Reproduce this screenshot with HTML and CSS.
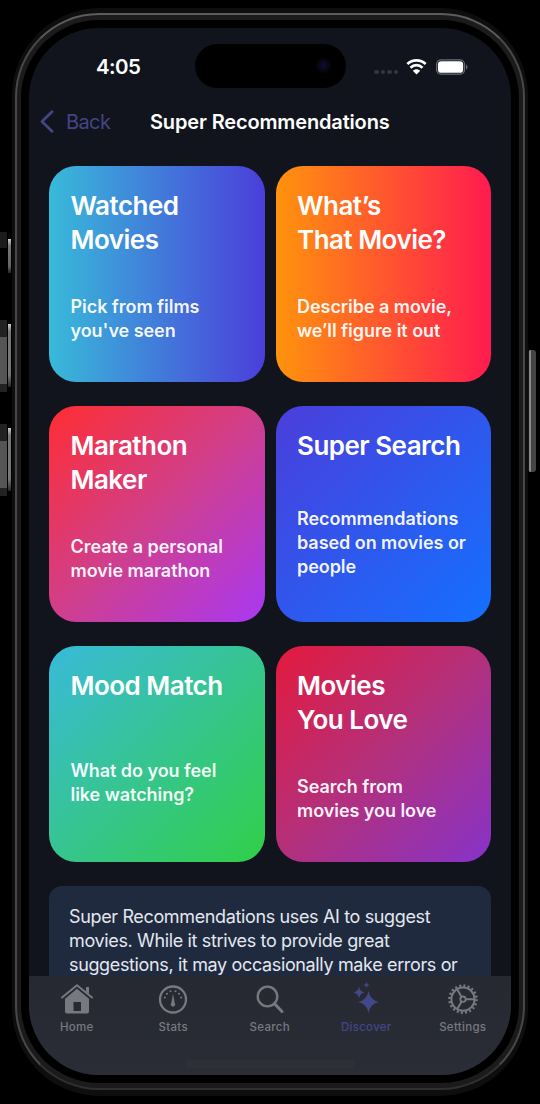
FILE: index.html
```html
<!DOCTYPE html>
<html lang="en">
<head>
<meta charset="utf-8">
<title>Super Recommendations</title>
<link rel="stylesheet" href="styles.css">
</head>
<body>
<div class="stage">
  <span class="key key-action"></span>
  <span class="key key-up"></span>
  <span class="key key-down"></span>
  <span class="key key-power"></span>
  <div class="frame"><div class="rim"><div class="bezel">
    <main class="screen">
      <div class="island"><span class="lens"></span></div>
      <header class="status">
        <span class="time">4:05</span>
        <span class="indicators">
          <span class="dots"><i></i><i></i><i></i><i></i></span>
          <svg class="wifi" viewBox="0 0 20 16"><path d="M1.3 5.600C6.200 1 13.800 1 18.700 5.600M4.300 9.100c3.300-3.200 8.100-3.200 11.400 0" fill="none" stroke="#fff" stroke-width="2.600"/><path d="M6.400 12C8.400 10 11.600 10 13.600 12L10 15.600z" fill="#fff"/></svg>
          <svg class="battery" viewBox="0 0 34 16"><rect x=".6" y=".6" width="28.800" height="14.800" rx="4.600" fill="none" stroke="#696c73" stroke-width="1.200"/><rect x="2" y="2" width="26" height="12" rx="3.500" fill="#fff"/><path d="M31 5.500c2 .8 2 4.200 0 5z" fill="#696c73"/></svg>
        </span>
      </header>
      <nav class="topbar">
        <a class="back"><svg viewBox="0 0 14 23"><path d="M12 1.800 2 11.500 12 21.200" fill="none" stroke="currentColor" stroke-width="2.800" stroke-linecap="round" stroke-linejoin="round"/></svg><span>Back</span></a>
        <h1 class="heading">Super Recommendations</h1>
      </nav>
      <section class="grid">
        <article class="card watched"><h2>Watched<br>Movies</h2><p>Pick from films<br>you've seen</p></article>
        <article class="card what"><h2>What’s<br>That Movie?</h2><p>Describe a movie,<br>we’ll figure it out</p></article>
        <article class="card marathon"><h2>Marathon<br>Maker</h2><p>Create a personal<br>movie marathon</p></article>
        <article class="card search"><h2>Super Search</h2><p>Recommendations<br>based on movies or<br>people</p></article>
        <article class="card mood"><h2>Mood Match</h2><p>What do you feel<br>like watching?</p></article>
        <article class="card love"><h2>Movies<br>You Love</h2><p>Search from<br>movies you love</p></article>
      </section>
      <section class="notice">Super Recommendations uses AI to suggest<br>movies. While it strives to provide great<br>suggestions, it may occasionally make errors or</section>
      <footer class="tabs">
        <a class="tab"><svg viewBox="0 0 34 32"><path d="M2 14.500 17 2.200 32 14.500" fill="none" stroke="currentColor" stroke-width="2" stroke-linecap="round" stroke-linejoin="round"/><path d="M26 4h3v7l-3-2.500z" fill="currentColor"/><path fill-rule="evenodd" d="M17 5.800 29 15.700v12.800q0 2-2 2H7q-2 0-2-2V15.700zM13.500 19v9h7.500v-9z" fill="currentColor"/></svg><span>Home</span></a>
        <a class="tab"><svg viewBox="0 0 34 32"><circle cx="17" cy="16.500" r="13" fill="none" stroke="currentColor" stroke-width="2.300"/><path d="m17 10.500 1.700 9.500a2.200 2.200 0 1 1-3.400 0z" fill="currentColor"/><g fill="currentColor"><circle cx="8.800" cy="14.500" r="1.050"/><circle cx="11" cy="10.800" r="1.050"/><circle cx="14.500" cy="8.300" r="1.050"/><circle cx="19.500" cy="8.300" r="1.050"/><circle cx="23" cy="10.800" r="1.050"/><circle cx="25.200" cy="14.500" r="1.050"/></g></svg><span>Stats</span></a>
        <a class="tab"><svg viewBox="0 0 34 32"><circle cx="14.500" cy="13.500" r="9.800" fill="none" stroke="currentColor" stroke-width="2.300"/><path d="m21.800 21 7.200 7.500" stroke="currentColor" stroke-width="3" stroke-linecap="round"/></svg><span>Search</span></a>
        <a class="tab active"><svg viewBox="0 0 34 32"><path fill="currentColor" d="M19.500 8q1.600 9.200 10.500 11-8.900 1.800-10.500 11-1.600-9.200-10.500-11 8.900-1.800 10.500-11zM10 3.500q.9 5 5.500 6-4.600 1-5.500 6-.9-5-5.500-6 4.600-1 5.500-6zM17.500-.9q.5 2.500 3 3-2.500.5-3 3-.5-2.500-3-3 2.500-.5 3-3z"/></svg><span>Discover</span></a>
        <a class="tab"><svg viewBox="0 0 34 32"><g fill="none" stroke="currentColor"><circle cx="17" cy="16.200" r="13.500" stroke-width="2.600" stroke-dasharray="2 2.241"/><circle cx="17" cy="16.200" r="11.600" stroke-width="2"/><circle cx="17" cy="16.200" r="2.700" stroke-width="1.800"/><path d="M19.700 16.200H28M15.600 13.900 11.300 6.400M15.600 18.500l-4.300 7.500" stroke-width="2"/></g></svg><span>Settings</span></a>
        <i class="homebar"></i>
      </footer>
    </main>
  </div></div></div>
</div>
</body>
</html>
```
FILE: styles.css
```css
* { box-sizing: border-box; }
body { margin: 0; background: #000; font-family: Inter, "Liberation Sans", sans-serif; color: #fff; }
.stage { position: relative; width: 540px; height: 1104px; padding: 8px 12px; overflow: hidden; background: #000; }

/* Phone shell */
.frame { width: 516px; height: 1088px; padding: 5px 3px 6px; border-radius: 88px; background: #0e0e0e; }
.rim { height: 100%; padding: 5px 4px; border: 2px solid #484848; border-top-color: #5c5c5c; border-bottom-color: #303030; border-radius: 84px; background: #1b1b1b; }
.bezel { height: 100%; padding: 8px; border-radius: 78px; background: #000; }

/* Side buttons: a body at the edge and a lit strip beside the frame */
.key { position: absolute; left: 0; width: 11px; background: linear-gradient(#ccc, #777 12%, #777 80%, #222) right / 3px 88% no-repeat, linear-gradient(#222 0 24%, #555 24% 89%, #222 89%) left / 7px 100% no-repeat; }
.key-action { top: 232px; height: 48px; background: linear-gradient(#ccc, #777 20%, #666 80%, #222) right / 3px 34px no-repeat, linear-gradient(#1b1b1b, #1b1b1b) left top / 7px 16px no-repeat; }
.key-up { top: 320px; height: 72px; }
.key-down { top: 424px; height: 72px; }
.key-power { left: 528px; top: 350px; width: 8px; height: 122px; background: linear-gradient(90deg, #161616 0 1px, #888 1px 3px, #444 3px); border-radius: 3px; }

.screen { position: relative; height: 100%; display: flex; flex-direction: column; overflow: hidden; border-radius: 70px; background: #11141d; }
.island { position: absolute; left: 166px; top: 16px; width: 151px; height: 44px; border-radius: 22px; background: #000; }
.lens { position: absolute; right: 15px; top: 14px; width: 15px; height: 15px; border-radius: 50%; background: radial-gradient(#0e0d35, #05050c 60%); }

.status { display: flex; justify-content: space-between; height: 68px; padding: 24px 42px 0 67px; }
.time { font-size: 20.500px; line-height: 30px; font-weight: 600; letter-spacing: -.6px; }
.indicators { display: flex; align-items: center; height: 30px; }
.dots { display: flex; gap: 2px; margin: 10px 8px 0 0; }
.dots i { width: 4.500px; height: 4.500px; border-radius: 50%; background: #33363e; }
.wifi { width: 21px; height: 17px; margin: -1px 9px 0 0; }
.battery { width: 33px; height: 16px; margin-top: -1px; }

.topbar { display: grid; grid-template-columns: 110px 1fr 110px; align-items: center; height: 51px; padding: 0 11px; }
.back { display: flex; align-items: center; gap: 12px; color: #434584; font-size: 20px; letter-spacing: -.6px; }
.back svg { width: 14px; height: 23px; }
.heading { margin: 0; font-size: 20px; font-weight: 600; line-height: 30px; letter-spacing: -.15px; white-space: nowrap; }

.grid { display: grid; grid-template-columns: 215.500px 215.500px; grid-auto-rows: 215.500px; column-gap: 11px; row-gap: 24.500px; padding: 19px 20px 0; }
.card { padding: 23px 0 0 21.500px; border-radius: 27px; white-space: nowrap; }
.card h2 { margin: 0; font-size: 26px; line-height: 33.500px; font-weight: 620; letter-spacing: -.52px; }
.card p { margin: 39px 0 0; font-size: 18px; line-height: 24px; font-weight: 620; letter-spacing: -.05px; color: #fffffff2; }
.watched { background: linear-gradient(90deg, #38bad9, #4b3edb); }
.what { background: linear-gradient(90deg, #ff930d, #ff1b4f); }
.marathon { background: linear-gradient(135deg, #ff2d32, #d03f8c, #a938f3); }
.search { background: linear-gradient(135deg, #4b3edb, #1470ff); }
.mood { background: linear-gradient(135deg, #38bad9, #36c590, #30cf48); }
.love { background: linear-gradient(135deg, #e41a3d, #b3307c, #8633c9); }
.search p { margin-top: 44px; }
.mood p { margin-top: 56px; }

.notice { flex: none; width: 442px; height: 130px; margin: 24px 0 0 20px; padding: 19px 0 0 20px; border-radius: 13px; background: #202a3e; color: #e3e7f0; font-size: 18px; line-height: 24px; letter-spacing: -.36px; white-space: nowrap; }

/* Tab bar overlays the scrolling content */
.tabs { position: absolute; left: -.500px; right: 0; bottom: 0; height: 99px; display: grid; grid-template-columns: repeat(5, 96.500px); padding-top: 7px; background: linear-gradient(#272932, #2b2d36); }
.tab { display: flex; flex-direction: column; align-items: center; color: #777981; font-size: 11.500px; line-height: 16px; font-weight: 500; letter-spacing: .3px; }
.tab svg { width: 34px; height: 32px; margin-bottom: 4px; overflow: visible; }
.active { color: #414788; }
.homebar { position: absolute; left: 157px; bottom: 7px; width: 168px; height: 8px; border-radius: 4px; background: #2f3037; }
```
